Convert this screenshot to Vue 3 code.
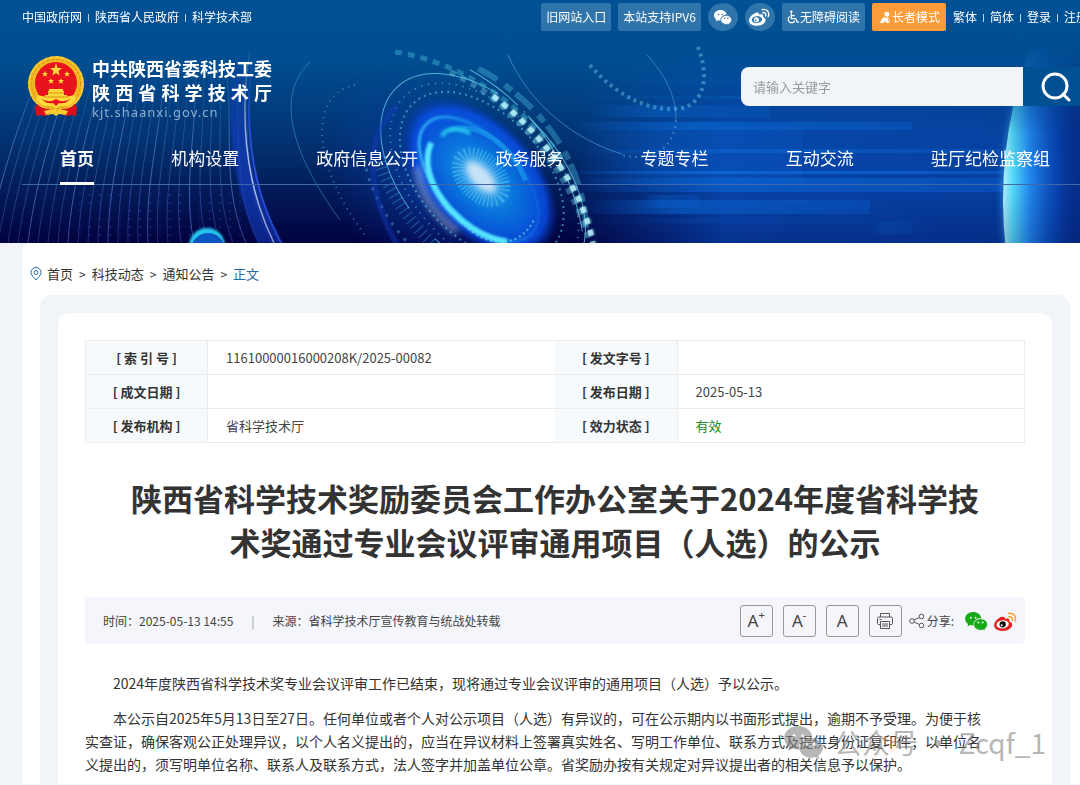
<template>
  <div class="page">
    <header class="header">
      <svg class="header-bg" viewBox="0 0 1080 243" preserveAspectRatio="xMidYMid slice" aria-hidden="true">
        <defs>
          <linearGradient id="sky" x1="0" y1="0" x2="0" y2="1">
            <stop offset="0" stop-color="#005195" />
            <stop offset="0.25" stop-color="#004e91" />
            <stop offset="0.6" stop-color="#03306f" />
            <stop offset="1" stop-color="#02023f" />
          </linearGradient>
          <linearGradient id="side" x1="0" y1="0" x2="1" y2="0">
            <stop offset="0" stop-color="#0a52c4" stop-opacity="0" />
            <stop offset="0.3" stop-color="#0a52c4" stop-opacity="0.75" />
            <stop offset="1" stop-color="#0848b4" stop-opacity="0.75" />
          </linearGradient>
          <linearGradient id="bar" x1="0" y1="0" x2="1" y2="0">
            <stop offset="0" stop-color="#0a68d8" stop-opacity="0" />
            <stop offset="0.35" stop-color="#0a68d8" />
            <stop offset="1" stop-color="#0a60d0" stop-opacity="0.7" />
          </linearGradient>
          <linearGradient id="fade" x1="0" y1="0" x2="0" y2="1">
            <stop offset="0.18" stop-color="#fff" stop-opacity="0" />
            <stop offset="0.55" stop-color="#fff" stop-opacity="0.9" />
            <stop offset="0.75" stop-color="#fff" />
            <stop offset="1" stop-color="#fff" stop-opacity="0.8" />
          </linearGradient>
          <linearGradient id="planet" gradientUnits="userSpaceOnUse" x1="1002" y1="0" x2="1078" y2="0">
            <stop offset="0" stop-color="#bdf3ff" />
            <stop offset="0.14" stop-color="#55dcf8" />
            <stop offset="0.36" stop-color="#238af0" />
            <stop offset="0.7" stop-color="#0b50c4" stop-opacity="0.7" />
            <stop offset="1" stop-color="#062d90" stop-opacity="0.2" />
          </linearGradient>
          <radialGradient id="disc">
            <stop offset="0" stop-color="#c5eaff" />
            <stop offset="0.16" stop-color="#4aa8ee" />
            <stop offset="0.4" stop-color="#0a78dc" />
            <stop offset="0.68" stop-color="#0758d8" />
            <stop offset="0.85" stop-color="#0a50ec" stop-opacity="0.8" />
            <stop offset="1" stop-color="#0733c0" stop-opacity="0" />
          </radialGradient>
          <radialGradient id="halo">
            <stop offset="0" stop-color="#0a4fd0" stop-opacity="0.8" />
            <stop offset="1" stop-color="#0a3fb0" stop-opacity="0" />
          </radialGradient>
          <linearGradient id="ring" x1="0" y1="1" x2="1" y2="0">
            <stop offset="0" stop-color="#4fe2ff" />
            <stop offset="0.5" stop-color="#1a9cf0" />
            <stop offset="1" stop-color="#1a6cf0" stop-opacity="0.2" />
          </linearGradient>
          <mask id="fadeMask">
            <rect width="1080" height="243" fill="url(#fade)" />
          </mask>
          <filter id="soft" x="-50%" y="-50%" width="200%" height="200%">
            <feGaussianBlur stdDeviation="3" />
          </filter>
          <filter id="glow" x="-50%" y="-50%" width="200%" height="200%">
            <feGaussianBlur stdDeviation="1" />
          </filter>
        </defs>
        <rect width="1080" height="243" fill="url(#sky)" />

        <g mask="url(#fadeMask)">
          <rect x="570" y="40" width="510" height="203" fill="url(#side)" />
          <rect
            v-for="(b, i) in bars"
            :key="'bar' + i"
            :x="b[0]"
            :y="b[1]"
            :width="b[2]"
            :height="b[3]"
            :opacity="b[4]"
            fill="url(#bar)"
          />
          <ellipse cx="1132" cy="200" rx="131" ry="240" fill="#48bdf8" opacity="0.45" filter="url(#soft)" />
          <ellipse cx="1132" cy="200" rx="129" ry="240" fill="#052f8c" />
          <ellipse cx="1132" cy="200" rx="129" ry="240" fill="url(#planet)" />

          <!-- curved light strands on the left -->
          <g fill="none" stroke="#7fa9f4">
            <path v-for="(s, i) in strands" :key="'strand' + i" :d="s.d" :stroke-opacity="s.o" />
          </g>
          <path d="M252 40C240 100 240 170 283 243L258 243C232 190 226 110 232 60Z" fill="#1240c8" opacity="0.65" filter="url(#glow)" />
          <path d="M250 50C240 110 243 180 274 243" fill="none" stroke="#d4e0ff" stroke-width="1.500" stroke-opacity="0.8" />
          <path d="M254 50C244 110 247 180 281 243" fill="none" stroke="#2b50e0" stroke-width="2" />
          <g fill="#2546e8" opacity="0.5">
            <circle v-for="(p, i) in dots" :key="'dot' + i" :cx="p[0]" :cy="p[1]" r="1" />
          </g>
        </g>
        <circle cx="207" cy="246" r="18" fill="#25c4ee" filter="url(#glow)" />
        <circle cx="208" cy="250" r="17" fill="#0b56c0" />

        <!-- glowing disc -->
        <ellipse cx="430" cy="180" rx="130" ry="95" fill="url(#halo)" opacity="0.65" transform="rotate(45 430 180)" />
        <g transform="rotate(47 481 177)" fill="none">
          <ellipse cx="481" cy="178" rx="96" ry="57" fill="url(#disc)" />
          <ellipse cx="481" cy="180" rx="76" ry="40" stroke="url(#ring)" stroke-width="3" opacity="0.8" filter="url(#glow)" />
          <path d="M422 190C436 226 508 234 546 202" stroke="#55e6ff" stroke-width="6" filter="url(#glow)" />
          <path d="M430 216C450 234 480 236 505 232" stroke="#a7b8d8" stroke-width="8" opacity="0.5" filter="url(#soft)" />
          <path d="M426 166C440 140 480 134 512 146" stroke="#1da4ee" stroke-width="5" stroke-linecap="round" opacity="0.6" />
          <path d="M424 176C422 168 430 160 440 156" stroke="#2cd4f0" stroke-width="5" stroke-linecap="round" opacity="0.7" filter="url(#glow)" />
          <ellipse cx="481" cy="177" rx="24" ry="14" stroke="#46ccf2" stroke-width="20" stroke-dasharray="1 2" opacity="0.6" />
          <ellipse cx="481" cy="177" rx="20" ry="9" fill="#c8e2f6" filter="url(#soft)" />
          <path d="M500 222C540 222 560 196 548 166" stroke="#5fdcf0" stroke-width="2" stroke-dasharray="2 3" opacity="0.7" />
          <ellipse cx="481" cy="176" rx="100" ry="62" stroke="#5cd8ec" stroke-width="2" stroke-dasharray="2 4" opacity="0.55" />
          <ellipse cx="484" cy="177" rx="126" ry="76" stroke="#61c8e4" stroke-width="1" stroke-dasharray="150 40 90 0" opacity="0.8" />
          <ellipse cx="486" cy="177" rx="116" ry="70" stroke="#68d3e5" stroke-width="2" stroke-dasharray="1 6" opacity="0.6" />
          <path d="M400 105C460 84 535 88 590 135" stroke="#52c8e2" stroke-width="6" stroke-dasharray="22 9 9 5" opacity="0.35" />
          <path d="M395 112C450 94 520 94 590 140" stroke="#74d9ed" stroke-dasharray="60 8 2 5" opacity="0.7" />
          <path d="M396 238C430 262 530 270 590 232" stroke="#54d6e2" stroke-width="12" stroke-dasharray="1 5" opacity="0.35" />
          <path d="M388 250C440 285 530 286 600 240" stroke="#59bfd6" stroke-width="3" stroke-dasharray="3 7" opacity="0.4" />
          <path d="M372 190C372 290 560 320 640 260" stroke="#163ac0" stroke-width="5" opacity="0.5" filter="url(#glow)" />
        </g>
        <path d="M395 52C465 62 530 112 563 160" fill="none" stroke="#4cc1dd" stroke-width="5" stroke-dasharray="7 6" opacity="0.4" />
        <path d="M450 72C512 100 570 170 590 243" fill="none" stroke="#7fdcf0" stroke-width="6" stroke-dasharray="6 6" opacity="0.35" />
        <path d="M493 96C545 135 583 190 593 243" fill="none" stroke="#8eeaf8" stroke-width="7" stroke-dasharray="6 6" opacity="0.6" filter="url(#glow)" />
        <path d="M493 96C545 135 583 190 593 243" fill="none" stroke="#c4f7fc" stroke-width="5" stroke-dasharray="6 6" opacity="0.75" />
        <path d="M310 62C270 100 300 165 340 220" fill="none" stroke="#3f9fc4" opacity="0.55" />
        <path d="M355 85C305 95 315 170 365 235" fill="none" stroke="#4cb6cc" stroke-width="2" stroke-dasharray="1 5" opacity="0.6" />
        <path d="M508 55C530 105 575 140 622 154" fill="none" stroke="#49a6d6" opacity="0.65" />
        <path d="M590 65C620 100 655 113 683 108C708 100 708 70 697 45" fill="none" stroke="#66bfe0" stroke-width="4" stroke-dasharray="3 4" opacity="0.5" />
        <path d="M647 55C665 75 676 95 676 120" fill="none" stroke="#5bb4dc" opacity="0.5" />
        <path d="M676 120C674 150 650 162 622 155" fill="none" stroke="#5bb4dc" stroke-width="2" stroke-dasharray="2 4" opacity="0.5" />
      </svg>

      <div class="header-inner">
        <div class="topbar">
          <ul class="links">
            <li v-for="t in siteLinks" :key="t"><a href="#">{{ t }}</a></li>
          </ul>
          <div class="tools">
            <a class="tool" href="#">旧网站入口</a>
            <a class="tool" href="#">本站支持IPV6</a>
            <a class="round" href="#" aria-label="微信">
              <svg viewBox="0 0 24 20" width="18" height="15" fill="#fff">
                <path :d="wechatBig" />
                <path :d="wechatSmall" stroke="#2f74aa" />
                <g fill="#2f74aa">
                  <circle cx="6" cy="6" r="1" /><circle cx="11" cy="6" r="1" />
                  <circle cx="14" cy="11" r="1" /><circle cx="18.500" cy="11" r="1" />
                </g>
              </svg>
            </a>
            <a class="round" href="#" aria-label="微博">
              <svg viewBox="0 0 24 20" width="21" height="18">
                <path :d="weiboBody" fill="#fff" />
                <ellipse cx="9" cy="13" rx="6" ry="4" fill="#2f74aa" transform="rotate(-8 9 13)" />
                <circle cx="8.500" cy="13.200" r="2.900" fill="#fff" />
                <circle cx="7.800" cy="13.800" r="1" fill="#2f74aa" />
                <path :d="weiboWaves" fill="none" stroke="#fff" stroke-width="1.600" stroke-linecap="round" />
              </svg>
            </a>
            <a class="tool" href="#">
              <svg viewBox="0 0 14 16" width="12" height="14" fill="none" stroke="#fff" stroke-width="1.500">
                <circle cx="5" cy="2" r="1.500" fill="#fff" stroke="none" />
                <path d="M5 4v6h5l2 4h2M5 6.500h4" />
                <path d="M3 7.500a4 4 0 1 0 6 5" />
              </svg>无障碍阅读
            </a>
            <button class="tool elder" type="button">
              <svg viewBox="0 0 12 14" width="11" height="13" fill="#fff">
                <circle cx="7.500" cy="3.500" r="2.700" />
                <path d="M4.500 6.500C2 8 1 10 0 13h4l1.500-2.500L7 13h4c0-3-1-5-2.500-6.200-1.200.8-2.800.8-4-.3z" />
                <path d="M9 8.500l1.500 4.500" stroke="#ff9c3a" />
              </svg>长者模式
            </button>
            <ul class="links">
              <li v-for="t in userLinks" :key="t"><a href="#">{{ t }}</a></li>
            </ul>
          </div>
        </div>

        <div class="masthead">
          <a class="logo" href="#">
            <svg class="emblem" viewBox="0 0 56 61" width="56" height="61" aria-hidden="true">
              <circle cx="28" cy="28" r="28" fill="#f2ba22" />
              <circle cx="28" cy="28" r="24.500" fill="none" stroke="#d98e14" stroke-width="1" stroke-dasharray="3 2" />
              <circle cx="28" cy="28" r="27" fill="none" stroke="#ffe157" stroke-width="1" stroke-dasharray="4 2" />
              <circle cx="28" cy="27" r="21" fill="#e8131d" />
              <g fill="#ffd93b">
                <polygon points="28,7 29.500,12 34,12 30.500,15 31.700,19.500 28,17 24.300,19.500 25.500,15 22,12 26.500,12" />
                <polygon
                  v-for="(s, i) in stars"
                  :key="'star' + i"
                  points="0,-3 0.800,-1 3,-1 1.300,0.500 2,2.700 0,1.400 -2,2.700 -1.300,0.500 -3,-1 -0.800,-1"
                  :transform="`translate(${s[0]} ${s[1]})`"
                />
                <path d="M21 33h14v2h1v4h3v3H17v-3h3v-4h1z" />
                <path d="M10 39c8 3 28 3 36 0l2 4c-5 8-12 8-16 6l-4 4-4-4c-4 2-11 2-16-6z" />
              </g>
              <path d="M20 37h16M17 41h22" stroke="#d98e14" />
              <path d="M14 43c5 3 9 3 14 0 5 3 9 3 14 0-3 4-7 5-11 4l-3 3-3-3c-4 1-8 0-11-4z" fill="#e8131d" />
              <path d="M9 48c4 4 8 5 14 5l-2 6-5 1-3-1-5 1-1-8z" fill="#d9101b" />
              <path d="M47 48c-4 4-8 5-14 5l2 6 5 1 3-1 5 1 1-8z" fill="#d9101b" />
              <path d="M16 55l8-2 4 3 4-3 8 2-2 4-7-1-3 2-3-2-7 1z" fill="#f8ca2d" />
            </svg>
            <span class="names">
              <strong>中共陕西省委科技工委</strong>
              <strong class="spread">陕西省科学技术厅</strong>
              <span class="domain">kjt.shaanxi.gov.cn</span>
            </span>
          </a>
          <form class="search" @submit.prevent>
            <input v-model="keyword" type="text" placeholder="请输入关键字" aria-label="请输入关键字" />
            <button type="submit" aria-label="搜索">
              <svg viewBox="0 0 32 32" width="32" height="32" fill="none" stroke="#fff" stroke-width="3">
                <circle cx="15" cy="15" r="12" />
                <path d="M23 23l6 6" stroke-linecap="round" />
              </svg>
            </button>
          </form>
        </div>

        <nav class="nav">
          <a v-for="(t, i) in navItems" :key="t" href="#" :class="{ active: i === 0 }">{{ t }}</a>
        </nav>
      </div>
    </header>

    <main class="main">
      <nav class="crumbs">
        <svg viewBox="0 0 12 14" width="12" height="14" fill="none" stroke="#2b68a5">
          <path d="M6 13C4 10.500 1 8.500 1 5.500a5 5 0 0 1 10 0C11 8.500 8 10.500 6 13z" />
          <circle cx="6" cy="5.500" r="2" />
        </svg>
        <a href="#">首页</a><i>&gt;</i>
        <a href="#">科技动态</a><i>&gt;</i>
        <a href="#">通知公告</a><i>&gt;</i>
        <a class="current" href="#">正文</a>
      </nav>

      <div class="panel">
        <article class="card">
          <table class="info">
            <tbody>
              <tr v-for="row in infoRows" :key="row[0]">
                <th scope="row">[ {{ row[0] }} ]</th>
                <td>{{ row[1] }}</td>
                <th scope="row" class="second">[ {{ row[2] }} ]</th>
                <td :class="{ valid: row[3] === '有效' }">{{ row[3] }}</td>
              </tr>
            </tbody>
          </table>

          <h1>陕西省科学技术奖励委员会工作办公室关于2024年度省科学技术奖通过专业会议评审通用项目（人选）的公示</h1>

          <div class="meta">
            <span>时间：</span>
            <time>2025-05-13 14:55</time>
            <span class="sep">|</span>
            <span>来源：</span>
            <span class="source">省科学技术厅宣传教育与统战处转载</span>
            <div class="actions">
              <button type="button" aria-label="放大字号">A<sup>+</sup></button>
              <button type="button" aria-label="缩小字号">A<sup>-</sup></button>
              <button type="button" aria-label="默认字号">A</button>
              <button type="button" aria-label="打印">
                <svg viewBox="0 0 18 18" width="18" height="18" fill="none" stroke="#555">
                  <path d="M4.500 5V1.500h9V5M4.500 12.500h-2a1 1 0 0 1-1-1V6.500a1.500 1.500 0 0 1 1.500-1.500h12a1.500 1.500 0 0 1 1.500 1.500v5a1 1 0 0 1-1 1h-2" />
                  <path d="M4.500 9.500h9v7h-9zM6 12h6M6 14h6M3.500 7.500h2" />
                </svg>
              </button>
            </div>
            <div class="share">
              <svg viewBox="0 0 16 16" width="16" height="16" fill="none" stroke="#555">
                <circle cx="3" cy="8" r="2.300" />
                <circle cx="12.500" cy="3.500" r="2.300" />
                <circle cx="12.500" cy="12.500" r="2.300" />
                <path d="M5 7l5.500-2.500M5 9l5.500 2.500" />
              </svg>
              <span>分享:</span>
              <a href="#" aria-label="分享到微信">
                <svg viewBox="0 0 24 20" width="23" height="19" fill="#17a917">
                  <path :d="wechatBig" />
                  <path :d="wechatSmall" stroke="#f4f6fb" stroke-width="0.600" />
                  <g fill="#f4f6fb">
                    <circle cx="6" cy="6" r="1" /><circle cx="11" cy="6" r="1" />
                    <circle cx="14" cy="11" r="1" /><circle cx="18.500" cy="11" r="1" />
                  </g>
                </svg>
              </a>
              <a href="#" aria-label="分享到微博">
                <svg viewBox="0 0 24 20" width="23" height="19">
                  <path :d="weiboBody" fill="#e6201e" />
                  <ellipse cx="9" cy="13" rx="6.500" ry="4.300" fill="#fff" transform="rotate(-8 9 13)" />
                  <circle cx="9" cy="13" r="3.300" fill="#111" />
                  <circle cx="8" cy="14" r="1" fill="#fff" />
                  <path :d="weiboWaves" fill="none" stroke="#f7a32b" stroke-width="1.600" stroke-linecap="round" />
                </svg>
              </a>
            </div>
          </div>

          <div class="content">
            <p>2024年度陕西省科学技术奖专业会议评审工作已结束，现将通过专业会议评审的通用项目（人选）予以公示。</p>
            <p>
              本公示自2025年5月13日至27日。任何单位或者个人对公示项目（人选）有异议的，可在公示期内以书面形式提出，逾期不予受理。为便于核<br />实查证，确保客观公正处理异议，以个人名义提出的，应当在异议材料上签署真实姓名、写明工作单位、联系方式及提供身份证复印件；以单位名<br />义提出的，须写明单位名称、联系人及联系方式，法人签字并加盖单位公章。省奖励办按有关规定对异议提出者的相关信息予以保护。
            </p>
          </div>
        </article>
      </div>
    </main>

    <div class="watermark">
      <svg viewBox="0 0 24 20" width="40" height="33" fill="#888">
        <path :d="wechatBig" />
        <path :d="wechatSmall" />
        <g fill="#fff">
          <circle cx="6" cy="6" r="1" /><circle cx="11" cy="6" r="1" />
          <circle cx="14" cy="11" r="1" /><circle cx="18.500" cy="11" r="1" />
        </g>
      </svg>
      <span>公众号 · Zcqf_1</span>
    </div>
  </div>
</template>

<script setup>
import { ref } from 'vue'

const keyword = ref('')

const siteLinks = ['中国政府网', '陕西省人民政府', '科学技术部']
const userLinks = ['繁体', '简体', '登录', '注册']
const navItems = ['首页', '机构设置', '政府信息公开', '政务服务', '专题专栏', '互动交流', '驻厅纪检监察组']

const infoRows = [
  ['索 引 号', '11610000016000208K/2025-00082', '发文字号', ''],
  ['成文日期', '', '发布日期', '2025-05-13'],
  ['发布机构', '省科学技术厅', '效力状态', '有效'],
]

// icon shapes shared by the header, the share bar and the overlay
const wechatBig =
  'M8.500 0C3.800 0 0 3.200 0 7.200c0 2.300 1.200 4.200 3.100 5.500L2.300 15.200l3-1.500c1 .3 2 .5 3.200.5h.6C8.400 9.500 12 6.200 17 6.200 16.300 2.600 12.800 0 8.500 0z'
const wechatSmall =
  'M16.300 7.200c-4 0-7.200 2.700-7.200 6s3.200 6 7.200 6c.9 0 1.700-.1 2.500-.4l2.500 1.200-.6-2.200c1.700-1 2.800-2.700 2.800-4.600 0-3.300-3.200-6-7.200-6z'
const weiboBody =
  'M8.500 5C5 5.500 0 10 0 14c0 4 4.500 6 9 6 6 0 10-3.300 10-6.500 0-2-1.500-3-3-3.400.8-2-.3-4.300-4.500-2.800C12 5.500 10.500 4.700 8.500 5z'
const weiboWaves = 'M15 1.500C20 .5 24 4.500 22 9.500M15.500 5C18 4.500 19.800 6.300 19 8.800'

const stars = [
  [17, 18],
  [39, 18],
  [23, 25],
  [33, 25],
]

// x, y, width, height, opacity
const bars = [
  [600, 77, 400, 8, 0.4],
  [580, 96, 440, 3, 0.6],
  [590, 105, 180, 12, 0.6],
  [570, 122, 342, 8, 0.8],
  [580, 130, 222, 54, 0.3],
  [580, 149, 420, 4, 0.6],
  [560, 171, 450, 3, 0.9],
  [570, 178, 450, 14, 0.6],
  [580, 200, 290, 14, 0.6],
  [640, 195, 60, 13, 0.4],
  [870, 221, 43, 13, 0.25],
  [590, 218, 280, 6, 0.15],
]

const strands = Array.from({ length: 27 }, (_, i) => {
  const top = 52 + i * 7
  const mid = 4 + i * 9
  const end = i * 10 - 12
  return {
    d: `M${top} 45C${mid + 20} 105 ${mid - 4} 175 ${end + (i > 18 ? (i - 18) * 3 : 0)} 243`,
    o: i % 4 === 0 ? 0.5 : 0.3,
  }
})

const dots = []
for (let x = 80; x < 250; x += 10) {
  for (let y = 195; y < 243; y += 8) {
    dots.push([x, y])
  }
}
</script>

<style>
body {
  background: #f1f5f9;
}
</style>

<style scoped>
.page {
  position: relative;
  overflow: hidden;
  color: #333;
  font-family: 'Noto Sans CJK SC', 'Noto Sans', sans-serif;
  font-size: 13px;
}

a {
  color: inherit;
  text-decoration: none;
}

button,
input {
  font: inherit;
  color: inherit;
  border: 0;
}

ul {
  list-style: none;
  margin: 0;
  padding: 0;
}

.header {
  position: relative;
  overflow: hidden;
  padding-bottom: 58px;
  color: #fff;
}

.header-bg {
  position: absolute;
  top: 0;
  left: 0;
  width: 100%;
  height: 100%;
}

.header-inner {
  position: relative;
  margin: 0 -8px 0 22px;
}

.topbar {
  display: flex;
  align-items: center;
  justify-content: space-between;
  padding-top: 3px;
  font-size: 12px;
  line-height: 28px;
  white-space: nowrap;
}

.links {
  display: flex;

  li + li::before {
    content: '';
    display: inline-block;
    width: 1px;
    height: 8px;
    margin: 0 6px;
    background: #bcd3e6;
  }
}

.tools {
  display: flex;
  gap: 7px;
}

.tool {
  display: flex;
  align-items: center;
  height: 28px;
  padding: 0 5px;
  border-radius: 2px;
  background: #2f74aa;
  line-height: 26px;
  gap: 1px;
}

.elder {
  padding: 0 6px 0 8px;
  background: #ff9c3a;
}

.round {
  display: flex;
  align-items: center;
  justify-content: center;
  width: 30px;
  height: 28px;
  border-radius: 50%;
  background: #2f74aa;
}

.masthead {
  display: flex;
  justify-content: space-between;
  align-items: flex-start;
  margin-top: 25px;
}

.logo {
  display: flex;
  gap: 8px;
  padding-left: 6px;
}

.names {
  display: flex;
  flex-direction: column;

  strong {
    font-size: 18px;
    line-height: 24px;
    font-weight: 700;
  }

  .spread {
    text-align-last: justify;
  }
}

.domain {
  color: #8fb0d3;
  font-family: 'Noto Sans', sans-serif;
  font-size: 13px;
  line-height: 17px;
  letter-spacing: 1px;
}

.search {
  display: flex;
  margin-top: 11px;

  input {
    width: 282px;
    height: 39px;
    box-sizing: border-box;
    padding: 0 12px;
    border-radius: 8px 0 0 8px;
    background: #f1f5fa;
    color: #333;
    outline: none;
  }

  input::placeholder {
    color: #999;
  }

  button {
    display: flex;
    align-items: center;
    justify-content: center;
    width: 65px;
    padding: 0;
    background: #005093;
  }
}

.nav {
  display: flex;
  justify-content: space-between;
  margin-top: 13px;
  padding: 0 38px;
  border-bottom: 1px solid #4068a8;
  font-size: 17px;
  line-height: 48px;

  a {
    border-bottom: 3px solid transparent;
    margin-bottom: -1px;
  }

  .active {
    border-color: #fff;
    font-weight: 700;
  }
}

.main {
  margin-left: 22px;
  border-radius: 8px 0 0;
  background: #fff;
}

.crumbs {
  display: flex;
  align-items: center;
  padding: 20px 8px 10px;
  line-height: 22px;

  svg {
    margin-right: 5px;
  }

  i {
    margin: 0 6px;
    font-style: normal;
    font-size: 12px;
  }

  .current {
    color: #2b68a5;
  }
}

.panel {
  margin: 0 10px 0 18px;
  padding: 18px 18px 0;
  border-radius: 12px 12px 0 0;
  background: #f1f5f9;
}

.card {
  padding: 27px 27px 0;
  border-radius: 12px 12px 0 0;
  background: #fff;
}

.info {
  width: 100%;
  border-collapse: collapse;
  table-layout: fixed;
  border: 1px solid #e9e9e9;

  th,
  td {
    height: 33px;
    padding: 0 18px;
    border: 1px solid #ebebeb;
    line-height: 20px;
    text-align: left;
    color: #444;
  }

  th {
    width: 13%;
    box-sizing: border-box;
    padding: 0;
    background: #f6fafd;
    color: #333;
    text-align: center;
    font-weight: 700;
  }

  td:first-of-type {
    border-right: 0;
  }

  .second {
    border-left: 0;
  }

  td.valid {
    color: #1c8a1c;
  }
}

h1 {
  margin: 33px 0;
  padding: 0 40px;
  color: #333;
  font-size: 31px;
  line-height: 44px;
  font-weight: 700;
  text-align: center;
}

.meta {
  display: flex;
  align-items: center;
  height: 47px;
  padding: 0 8px 0 18px;
  border-radius: 4px;
  background: #f4f6fb;
  font-size: 12px;
  white-space: nowrap;
  color: #444;
}

.sep {
  margin: 0 18px;
  color: #999;
}

.actions {
  display: flex;
  gap: 10px;
  margin-left: auto;

  button {
    display: flex;
    align-items: center;
    justify-content: center;
    width: 33px;
    height: 32px;
    padding: 0;
    border: 1px solid #999;
    border-radius: 3px;
    background: transparent;
    color: #444;
    font-family: 'Noto Sans', sans-serif;
    font-size: 17px;
  }

  sup {
    align-self: flex-start;
    font-size: 11px;
    line-height: 18px;
  }
}

.share {
  display: flex;
  align-items: center;
  gap: 2px;
  margin-left: 7px;

  a {
    display: flex;
    margin-left: 4px;
    padding-top: 2px;
  }

  span {
    margin-right: 5px;
  }
}

.content {
  padding-top: 28px;
  font-size: 14px;
  line-height: 23px;
  white-space: nowrap;

  p {
    margin: 0 0 12px;
    text-indent: 2em;
  }

  p:last-child {
    margin-bottom: 0;
    padding-bottom: 8px;
  }
}

.watermark {
  position: absolute;
  top: 720px;
  right: 34px;
  display: flex;
  align-items: center;
  gap: 10px;
  color: #888;
  font-size: 28px;
  line-height: 44px;
  opacity: 0.6;
  white-space: nowrap;
}
</style>
